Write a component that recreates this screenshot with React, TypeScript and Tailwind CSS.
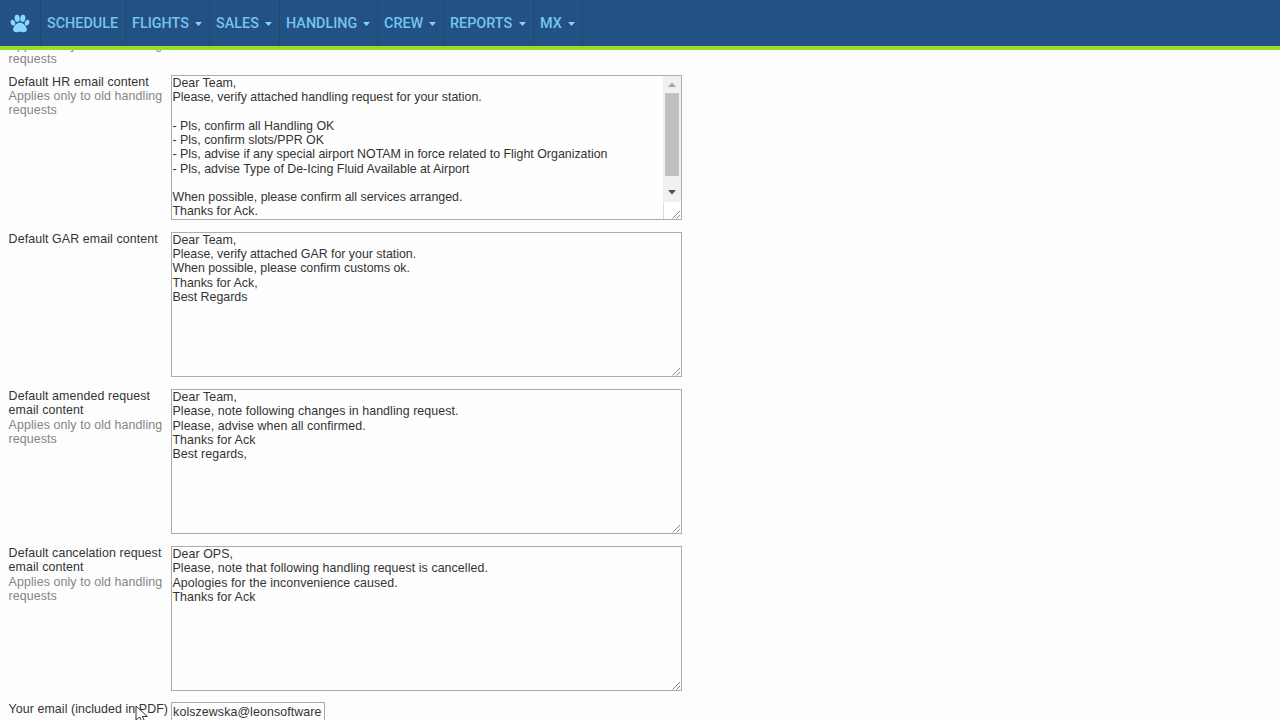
import React from 'react';

const NAV: { label: string; width: string; menu: boolean }[] = [
  { label: 'SCHEDULE', width: 'w-[85px]', menu: false },
  { label: 'FLIGHTS', width: 'w-[84px]', menu: true },
  { label: 'SALES', width: 'w-[70px]', menu: true },
  { label: 'HANDLING', width: 'w-[98px]', menu: true },
  { label: 'CREW', width: 'w-[66px]', menu: true },
  { label: 'REPORTS', width: 'w-[90px]', menu: true },
  { label: 'MX', width: 'w-[49px]', menu: true },
];

const ROWS = [
  {
    label: ['Default HR email content'],
    old: true,
    scroll: true,
    tracking: 'tracking-normal',
    text: `Dear Team,
Please, verify attached handling request for your station.

- Pls, confirm all Handling OK
- Pls, confirm slots/PPR OK
- Pls, advise if any special airport NOTAM in force related to Flight Organization
- Pls, advise Type of De-Icing Fluid Available at Airport

When possible, please confirm all services arranged.
Thanks for Ack.`,
  },
  {
    label: ['Default GAR email content'],
    old: false,
    scroll: false,
    tracking: 'tracking-[-0.02px]',
    text: `Dear Team,
Please, verify attached GAR for your station.
When possible, please confirm customs ok.
Thanks for Ack,
Best Regards`,
  },
  {
    label: ['Default amended request', 'email content'],
    old: true,
    scroll: false,
    tracking: 'tracking-[0.07px]',
    text: `Dear Team,
Please, note following changes in handling request.
Please, advise when all confirmed.
Thanks for Ack
Best regards,`,
  },
  {
    label: ['Default cancelation request', 'email content'],
    old: true,
    scroll: false,
    tracking: 'tracking-[0.07px]',
    text: `Dear OPS,
Please, note that following handling request is cancelled.
Apologies for the inconvenience caused.
Thanks for Ack`,
  },
];

function Paw() {
  return (
    <svg width="20" height="19" viewBox="0 0 20 19" fill="#86d8ff">
      <ellipse cx="7.2" cy="4.3" rx="2.5" ry="3.6" transform="rotate(-8 7.2 4.3)" />
      <ellipse cx="12.8" cy="4.3" rx="2.5" ry="3.6" transform="rotate(8 12.8 4.3)" />
      <ellipse cx="2.9" cy="8.8" rx="2.2" ry="3" transform="rotate(-22 2.9 8.8)" />
      <ellipse cx="17.1" cy="8.8" rx="2.2" ry="3" transform="rotate(22 17.1 8.8)" />
      <path d="M10 8.4c-3 0-6.9 4.1-6.9 7.2 0 1.9 1.4 2.7 3.2 2.7 1.5 0 2.5-.6 3.7-.6s2.2.6 3.7.6c1.8 0 3.2-.8 3.2-2.7 0-3.1-3.9-7.2-6.9-7.2z" />
    </svg>
  );
}

function Grip() {
  return (
    <svg className="absolute right-0 bottom-0" width="9" height="9" viewBox="0 0 9 9" fill="none" stroke="#8a8a8a" strokeWidth="1">
      <path d="M0.5 8.5L8 1M4.5 8.5L8 5" />
    </svg>
  );
}

function Scrollbar() {
  return (
    <div className="absolute top-0 right-0 flex h-full w-[18px] flex-col">
      <div className="flex h-[126px] flex-col items-center bg-[#f1f1f1]">
        <svg className="shrink-0" width="10" height="17" viewBox="0 0 10 17" fill="#a3a3a3">
          <path d="M1 11L5 6.5L9 11z" />
        </svg>
        <div className="h-[83px] w-[14px] shrink-0 bg-[#c0c0c0]" />
        <svg width="10" height="26" viewBox="0 0 10 26" fill="#505050">
          <path d="M1 14L5 18.5L9 14z" />
        </svg>
      </div>
      <div className="flex-1 border-l border-[#dcdcdc] bg-white" />
    </div>
  );
}

function Hint() {
  return <div className="whitespace-nowrap text-[#858585]">Applies only to old handling<br />requests</div>;
}

export default function App() {
  return (
    <div className="relative flex h-[720px] w-[1280px] flex-col overflow-hidden bg-[#fdfdfd] font-['Liberation_Sans',Arial,sans-serif] text-[12.4px] leading-[14.3px] text-[#333]">
      <header className="flex h-[50px] shrink-0 border-b-4 border-[#98dc2c] bg-[#245183] font-[Roboto,sans-serif] text-[14.4px] font-medium text-[#74c4f0]">
        <div className="flex w-[41px] items-center border-r border-[#1f4975] pl-[10px]">
          <Paw />
        </div>
        {NAV.map((n) => (
          <div key={n.label} className={`flex shrink-0 items-center justify-between border-r border-[#1f4975] pt-[2px] pr-[7px] pl-[6px] ${n.width}`}>
            <span className="whitespace-nowrap">{n.label}</span>
            {n.menu && (
              <svg width="7" height="4" viewBox="0 0 7 4" fill="#80d2fb">
                <path d="M0 0H7L3.5 4z" />
              </svg>
            )}
          </div>
        ))}
      </header>
      <main className="flex min-h-0 flex-1 flex-col overflow-hidden pl-[8.6px]">
        <div className="-mt-[12px] h-[36.8px] shrink-0 tracking-[0.1px]">
          <Hint />
        </div>
        {ROWS.map((r) => (
          <section key={r.label[0]} className="flex h-[157.1px] shrink-0">
            <div className="w-[162px] shrink-0 whitespace-nowrap tracking-[0.1px]">
              {r.label.map((l) => (
                <div key={l}>{l}</div>
              ))}
              {r.old && <Hint />}
            </div>
            <div className="relative h-[145px] w-[511px] border border-[#acacac] bg-[#fefefe] pl-[0.9px]">
              <div className={`whitespace-pre ${r.tracking}`}>{r.text}</div>
              {r.scroll && <Scrollbar />}
              <Grip />
            </div>
          </section>
        ))}
        <div className="-mt-[0.8px] flex shrink-0">
          <div className="w-[162px] shrink-0 tracking-[0.08px] whitespace-nowrap">Your email (included in PDF)</div>
          <div className="h-[20px] w-[154px] overflow-hidden border border-[#acacac] bg-[#fefefe] pt-[1.3px] pl-[1.5px] tracking-[0.1px] whitespace-nowrap">kolszewska@leonsoftware</div>
        </div>
      </main>
      <svg className="absolute top-[705px] left-[135px]" width="14" height="15" viewBox="0 0 14 15" fill="#fff" stroke="#333" strokeWidth="1">
        <path d="M1 1V15L4.7 12L7.6 18L10 17L7.4 11.5H12.3z" />
      </svg>
    </div>
  );
}
